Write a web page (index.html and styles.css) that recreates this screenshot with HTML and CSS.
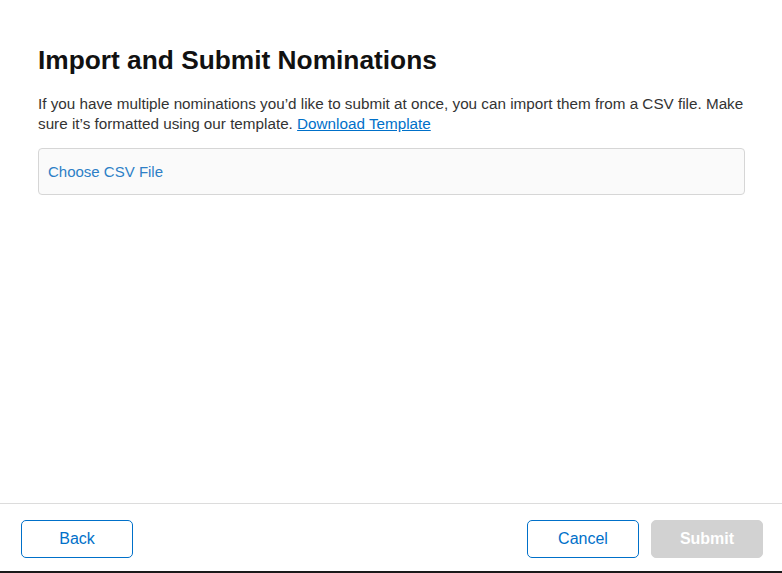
FILE: index.html
```html
<!DOCTYPE html>
<html>
<head>
<meta charset="utf-8">
<link rel="stylesheet" href="styles.css">
</head>
<body>
<div class="modal">
  <main class="content">
    <h1 class="title">Import and Submit Nominations</h1>
    <p class="desc">If you have multiple nominations you’d like to submit at once, you can import them from a CSV file. Make sure it’s formatted using our template. <a class="link" href="#">Download Template</a></p>
    <div class="file-box"><span class="file-label">Choose CSV File</span></div>
  </main>
  <footer class="footer">
    <button class="btn btn-outline">Back</button>
    <div class="right">
      <button class="btn btn-outline">Cancel</button>
      <button class="btn btn-disabled">Submit</button>
    </div>
  </footer>
</div>
</body>
</html>
```

FILE: styles.css
```css
* { box-sizing: border-box; }
html, body { margin: 0; padding: 0; }
body {
  width: 782px;
  height: 573px;
  background: #fff;
  font-family: "Liberation Sans", Arial, sans-serif;
  color: #1d1d1f;
  overflow: hidden;
}
.modal {
  height: 573px;
  display: flex;
  flex-direction: column;
  border-bottom: 2px solid #1a1a1a;
}
.content {
  flex: 1;
  padding: 44px 37px 0 38px;
}
.title {
  margin: 0;
  font-size: 26.3px;
  font-weight: 700;
  line-height: 32px;
  color: #111;
}
.desc {
  margin: 18px 0 0;
  font-size: 15.25px;
  line-height: 20px;
  color: #333;
}
.link {
  color: #0070c9;
  text-decoration: underline;
}
.file-box {
  margin-top: 14px;
  height: 47px;
  border: 1px solid #d6d6d6;
  border-radius: 4px;
  background: #fafafa;
  display: flex;
  align-items: center;
  padding-left: 9px;
}
.file-label {
  font-size: 15px;
  color: #2d7fc6;
}
.footer {
  height: 68px;
  border-top: 1px solid #dcdcdc;
  display: flex;
  justify-content: space-between;
  align-items: flex-start;
  padding: 16px 19px 0 21px;
}
.right {
  display: flex;
  gap: 12px;
}
.btn {
  width: 112px;
  height: 38px;
  border-radius: 5px;
  font-family: "Liberation Sans", Arial, sans-serif;
  font-size: 16px;
  line-height: 18px;
  padding: 0;
  cursor: pointer;
}
.btn-outline {
  background: #fff;
  border: 1px solid #0070c9;
  color: #0070c9;
}
.btn-disabled {
  background: #d2d2d2;
  border: 1px solid #d2d2d2;
  color: #fff;
  font-weight: 700;
}
```
